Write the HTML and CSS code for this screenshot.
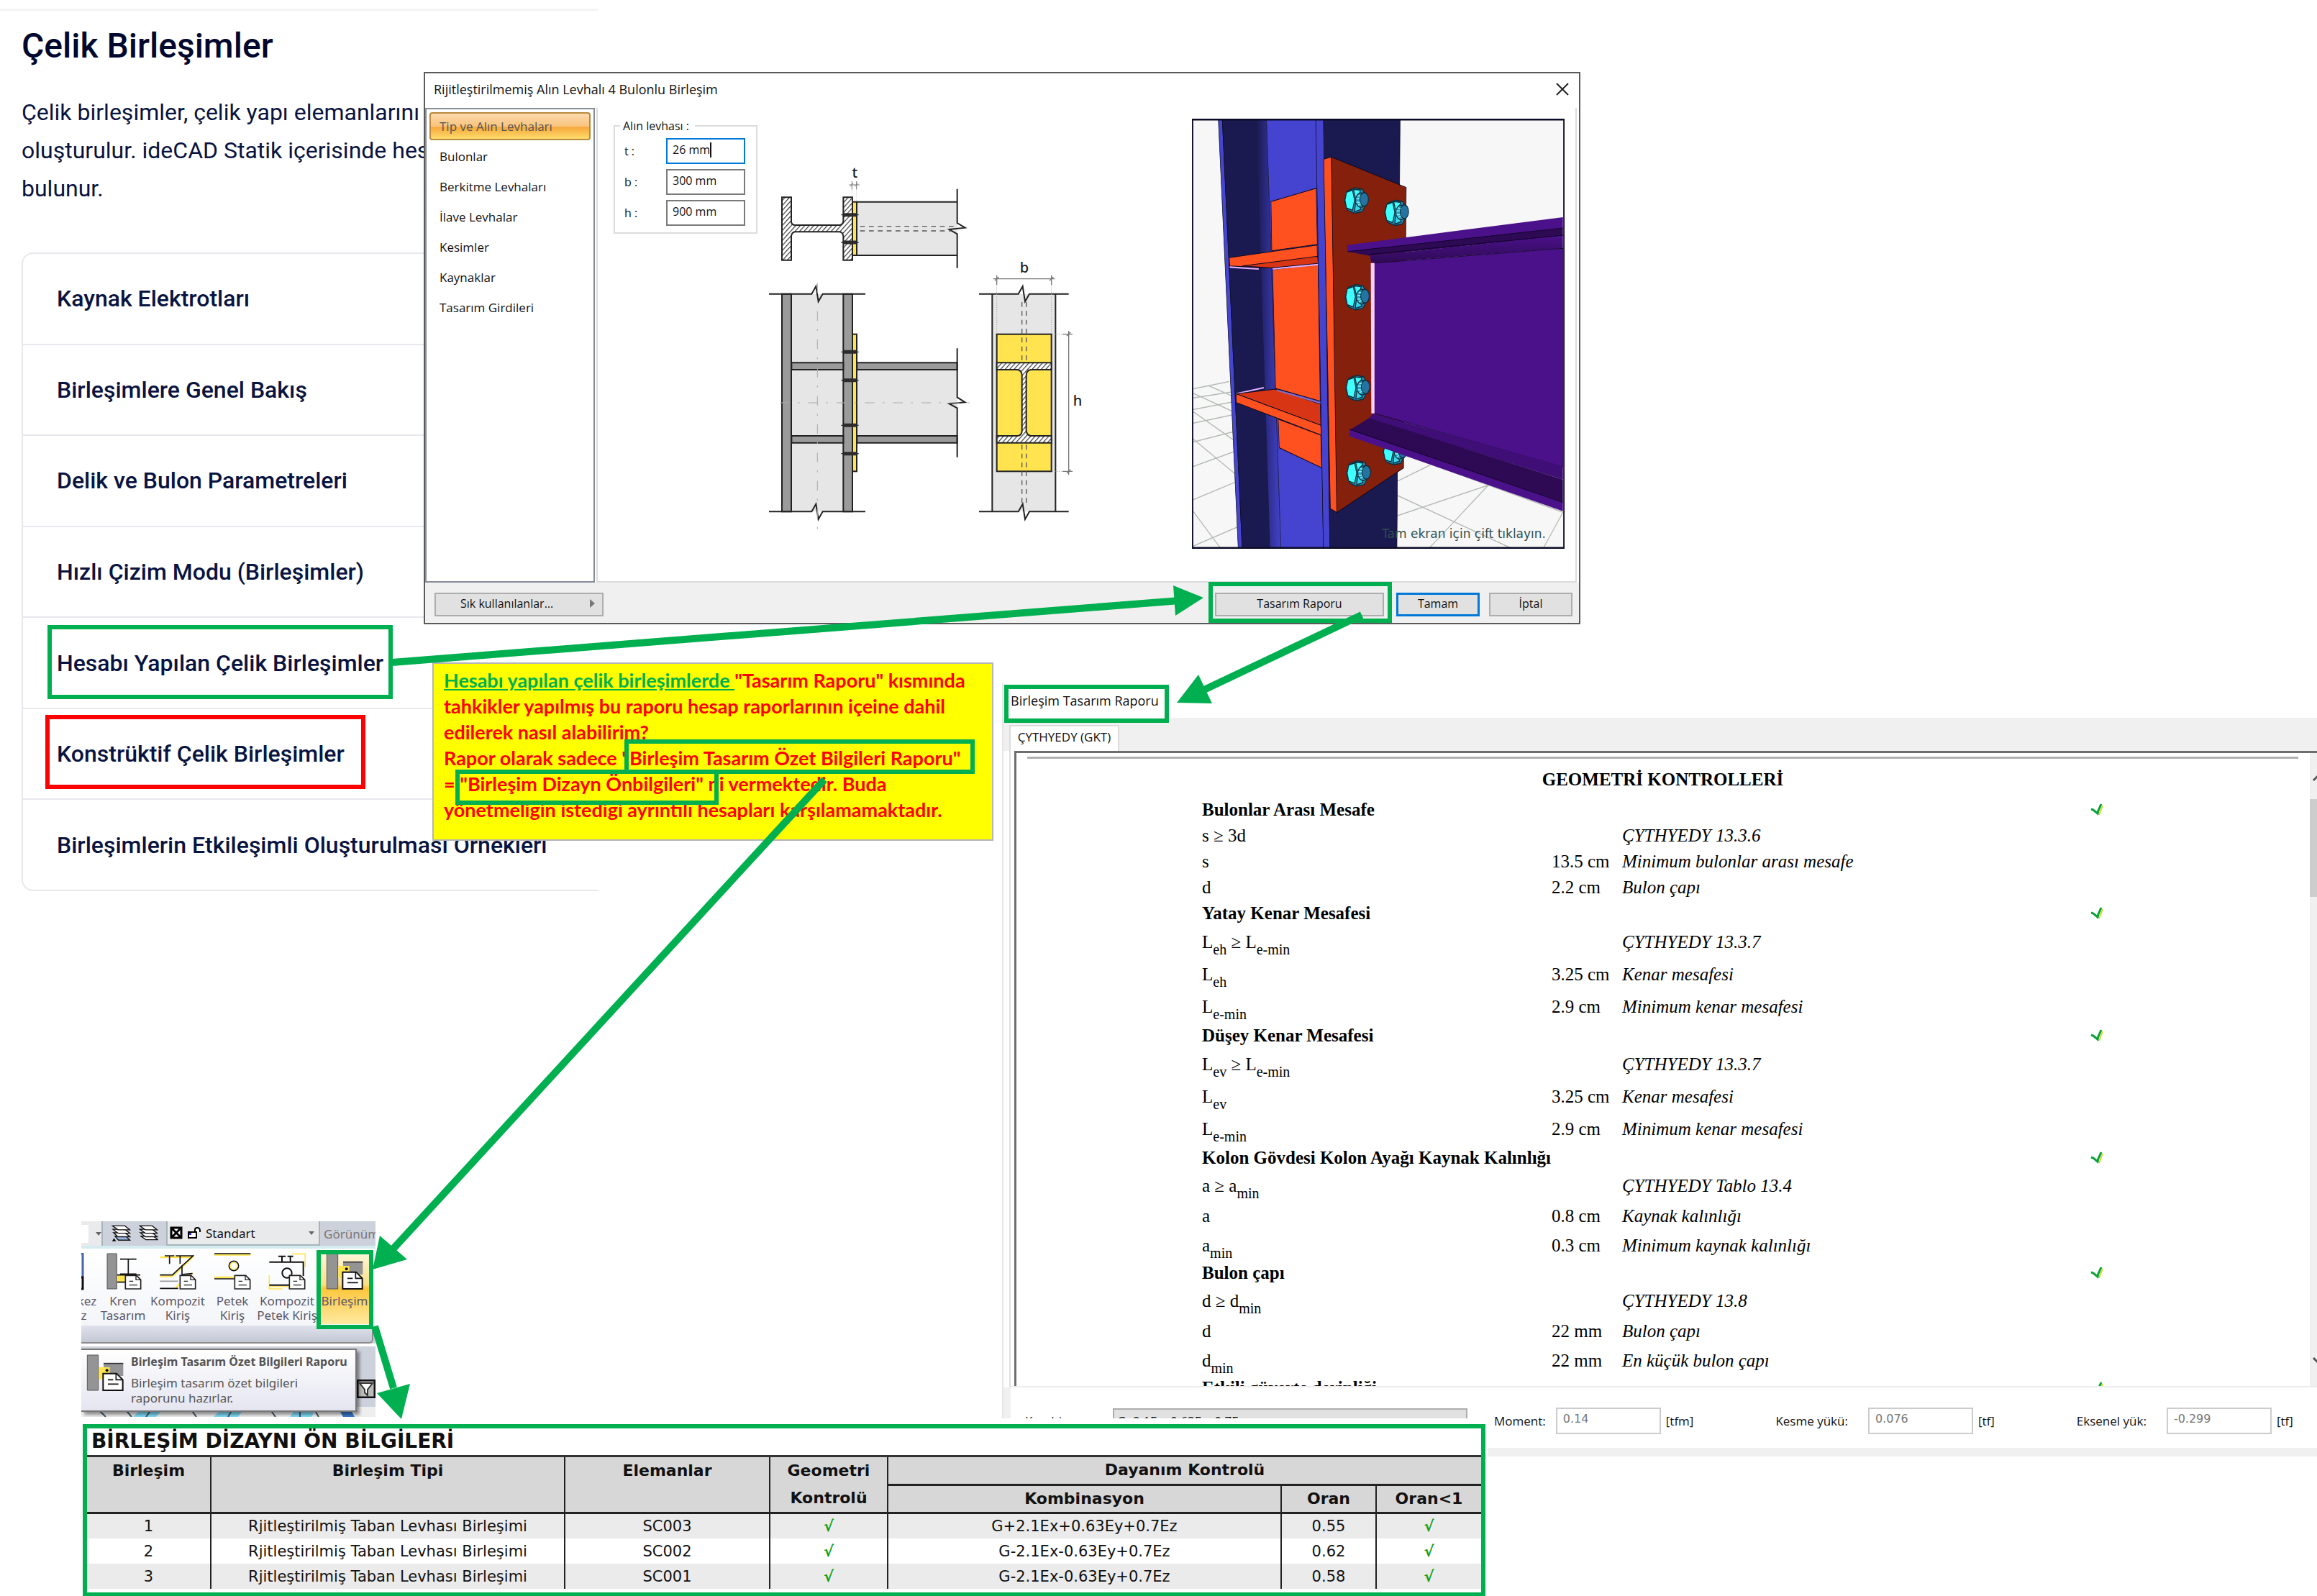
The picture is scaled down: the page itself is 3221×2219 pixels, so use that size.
FILE: index.html
```html
<!DOCTYPE html>
<html lang="tr">
<head>
<meta charset="utf-8">
<meta name="viewport" content="width=device-width, initial-scale=1">
<title>Çelik Birleşimler</title>
<link rel="stylesheet" href="styles.css">
</head>
<body>
<main class="board">

<article class="article">
  <h1>Çelik Birleşimler</h1>
  <p>Çelik birleşimler, çelik yapı elemanlarını b<br>oluşturulur. ideCAD Statik içerisinde hes<br>bulunur.</p>
  <nav class="topics">
    <a href="#">Kaynak Elektrotları</a>
    <a href="#">Birleşimlere Genel Bakış</a>
    <a href="#">Delik ve Bulon Parametreleri</a>
    <a href="#">Hızlı Çizim Modu (Birleşimler)</a>
    <a href="#">Hesabı Yapılan Çelik Birleşimler</a>
    <a href="#">Konstrüktif Çelik Birleşimler</a>
    <a href="#">Birleşimlerin Etkileşimli Oluşturulması Örnekleri</a>
  </nav>
</article>

<section class="dialog">
  <header class="dialog-title">
    <h2>Rijitleştirilmemiş Alın Levhalı 4 Bulonlu Birleşim</h2>
    <button class="close" aria-label="Kapat"><svg width="18" height="18" viewBox="0 0 18 18"><path d="M1 1L17 17M17 1L1 17" stroke="#222" stroke-width="2" fill="none"/></svg></button>
  </header>
  <div class="dialog-body">
    <nav class="pages">
      <button class="on">Tip ve Alın Levhaları</button>
      <button>Bulonlar</button>
      <button>Berkitme Levhaları</button>
      <button>İlave Levhalar</button>
      <button>Kesimler</button>
      <button>Kaynaklar</button>
      <button>Tasarım Girdileri</button>
    </nav>
    <div class="sheet">
      <fieldset class="plate">
        <legend>Alın levhası :</legend>
        <label for="pt">t :</label><span class="caret-box"><input id="pt" class="focus" value="26 mm"></span>
        <label for="pb">b :</label><input id="pb" value="300 mm">
        <label for="ph">h :</label><input id="ph" value="900 mm">
      </fieldset>
      <svg class="drawing" viewBox="60 0 1440 1560">
        <defs>
          <pattern id="hatch" width="14" height="14" patternUnits="userSpaceOnUse" patternTransform="rotate(42)"><rect width="14" height="14" fill="#fff"/><path d="M0 0V14" stroke="#333" stroke-width="7"/></pattern>
        </defs>
        <g stroke="#222" stroke-width="6" fill="#e6e6e6">
          <path stroke="none" d="M456 182H875V405H456Z"/>
          <path fill="none" d="M456 182H875M456 405H875M875 128V270L908 290L842 297L875 316V458"/>
          <path fill="none" stroke-width="4" stroke="#555" stroke-dasharray="20 17" d="M470 284H870M470 303H850"/>
          <path fill="url(#hatch)" d="M144 163H183V265Q185 279 200 279H384Q399 277 400 262V163H438V425H400V325Q398 309 384 307H200Q185 308 183 325V425H144Z"/>
          <rect x="438" y="182" width="18" height="223" fill="#ffe44f"/>
          <path stroke="#777" stroke-width="3" fill="none" d="M436 96V130M455 96V130M424 111H468M430 118L442 104M449 118L461 104"/>
          <path stroke="#aaa" stroke-width="2" stroke-dasharray="4 5" fill="none" d="M436 130V180M455 130V180"/>
          <path stroke="none" d="M183 566H400V1474H183ZM456 853H875V1187H456Z"/>
          <path fill="#9b9b9b" d="M144 566H183V1474H144ZM400 566H438V1474H400Z"/>
          <path fill="#9b9b9b" d="M184 853H400V882H184ZM184 1158H400V1187H184ZM457 853H875V882H457ZM457 1158H875V1187H457Z"/>
          <rect x="438" y="734" width="18" height="572" fill="#ffe44f"/>
          <path fill="none" d="M90 566H268L286 534L296 598L314 566H492M90 1474H268L286 1442L296 1506L314 1474H492M875 793V997L908 1018L842 1024L875 1042V1247"/>
        </g>
        <g stroke="#2c2c2c" stroke-width="15"><path d="M402 236H454M402 351H454M402 808H454M402 926H454M402 1114H454M402 1232H454"/><path stroke-width="4" d="M391 236H464M391 351H464M391 808H464M391 926H464M391 1114H464M391 1232H464"/></g>
        <path fill="none" stroke="#aaa" stroke-width="3" stroke-dasharray="40 34 8 36" d="M292 520V1560M136 1020H960"/>
        <g stroke="#222" stroke-width="6" fill="#e6e6e6">
          <path stroke="none" d="M1021 566H1285V1474H1021Z"/>
          <path fill="none" d="M1021 566V1474M1285 566V1474"/>
          <rect x="1040" y="734" width="228" height="572" fill="#ffe44f"/>
          <path fill="none" stroke="#555" stroke-width="4" stroke-dasharray="20 17" d="M1145 600V850M1163 600V850M1145 1195V1450M1163 1195V1450"/>
          <path fill="url(#hatch)" d="M1040 853H1268V882H1182Q1163 886 1163 905V1136Q1165 1156 1182 1158H1268V1187H1040V1158H1126Q1145 1156 1145 1136V905Q1145 886 1126 882H1040Z"/>
          <path fill="none" d="M966 566H1130L1148 534L1158 598L1176 566H1340M966 1474H1130L1148 1442L1158 1506L1176 1474H1340"/>
          <path stroke="#777" stroke-width="4" fill="none" d="M1025 503H1282M1040 488V528M1268 488V528M1032 511L1048 495M1260 511L1276 495M1340 720V1320M1314 734H1356M1314 1306H1356M1332 742L1348 726M1332 1314L1348 1298"/>
          <path stroke="#aaa" stroke-width="3" stroke-dasharray="4 5" fill="none" d="M1040 530V730M1268 530V730M1272 734H1310M1272 1306H1310"/>
        </g>
        <g font-family="Noto Sans, sans-serif" font-size="60" font-weight="500" fill="#222" text-anchor="middle"><text x="448" y="80">t</text><text x="1155" y="478">b</text><text x="1377" y="1031">h</text></g>
      </svg>
      <div class="view">
        <svg viewBox="76 148 1400 1188" preserveAspectRatio="none">
          <defs>
            <linearGradient id="fil"><stop offset="0" stop-color="#1a1a50"/><stop offset="1" stop-color="#4343cc"/></linearGradient>
            <linearGradient id="bm" x2="0" y2="1"><stop offset="0" stop-color="#4b118a"/><stop offset="1" stop-color="#2e0a55"/></linearGradient>
            <g id="bolt" stroke="#0c2c3a" stroke-width="3"><path fill="#2788b0" d="M-46 2L-34 -26L-6 -34L22 -30L30 -14L30 18L20 32L-8 36L-34 28Z"/><path fill="#40ffff" d="M-38 -22L-16 -28L-8 0L-16 28L-38 22L-44 0ZM-12 -30L14 -28L6 -8L-4 -4Z"/><path fill="#35d8e8" d="M-4 6L6 4L16 26L-8 32Z"/><ellipse cx="16" cy="0" rx="20" ry="20" fill="#2fa0c0"/><ellipse cx="28" cy="-2" rx="16" ry="19" fill="#2473a0"/><path fill="none" stroke="#7ff" d="M4 -12L14 -11M-1 -4L11 -4M-1 6L12 6M5 14L15 10"/></g>
          </defs>
          <path fill="#f7f7f7" d="M76 148H1476V1336H76Z"/>
          <path fill="none" stroke="#b4bab4" stroke-width="3" d="M76 895L215 874M76 920L225 903M76 952L230 930M76 990L235 965M76 1042L245 1010M76 1110L245 1065M76 1202L245 1150M76 1330L250 1275M140 886L245 920M76 905L245 962M76 955L245 1042M76 1030L248 1135M76 1228L185 1336M846 1150L970 1105M846 1245L1190 1160M965 1336L1190 1160L1340 1195M1395 1336L1470 1235L870 1075M846 1188L1280 1336"/>
          <g stroke="#0a0a22" stroke-width="2">
            <path fill="#4545d0" d="M175 148H190L265 1336H250Z"/><path fill="#1a1a50" d="M190 148H325L380 1336H265Z"/>
            <path fill="url(#fil)" stroke="none" d="M318 148H356L410 1336H370Z"/><path fill="#4444d0" d="M356 148H545L570 1336H410Z"/>
            <path fill="#1a1a50" d="M570 148H858L846 1336H594Z"/>
            <path fill="#ff5020" d="M373 377L543 340L547 495L376 513ZM379 565L550 550L558 928L390 893ZM400 978L560 1022L563 1112L404 1057Z"/>
            <path fill="#ff5020" d="M216 532L546 497L548 545L375 560L218 555Z"/><path fill="#d83515" d="M265 555L548 528L550 548L375 560Z"/>
            <path stroke="#e0b0ff" stroke-width="4" fill="none" d="M380 563L550 551M218 558L327 563M242 908L346 891"/>
            <path fill="#d83515" d="M242 908L390 895L558 936L560 995Z"/><path fill="#ff5020" d="M242 908L560 995L562 1022L243 932Z"/>
            <path stroke="#8a70c0" stroke-width="4" d="M395 898L558 933"/>
            <path fill="#4444d0" d="M541 148H570L594 1336H570Z"/>
            <path fill="#ff5020" d="M571 260L600 254L622 1236L596 1225Z"/><path fill="#85200c" d="M600 254L881 338L871 1113L620 1236Z"/>
          </g>
          <use href="#bolt" x="695" y="373"/><use href="#bolt" x="846" y="407"/><use href="#bolt" x="698" y="640"/><use href="#bolt" x="700" y="891"/><use href="#bolt" x="703" y="1127"/><use href="#bolt" x="840" y="1068"/>
          <path fill="#4b118a" d="M659 497L1470 420V450L661 517Z"/><path fill="#2e0a55" d="M661 515L1470 450V472L745 527Z"/>
          <path fill="url(#bm)" d="M745 527L1470 470V506L750 547Z"/>
          <path fill="#4b118a" stroke="#1a0535" stroke-width="2" d="M762 547L1470 506V1110L762 962Z"/><path fill="#ffd0ff" d="M748 547H762V962H750Z"/>
          <path fill="#3f0e76" d="M755 962L1470 1108V1145L740 977Z"/><path fill="#2e0a55" d="M742 975L1470 1145V1208L668 1008Z"/><path fill="#4b118a" d="M668 1006L1470 1208V1232L668 1025Z"/>
          <path fill="none" stroke="#12022a" stroke-width="2" d="M740 523L1470 470M668 1006L1470 1208M661 515L1470 450"/>
          <rect x="78" y="150" width="1396" height="1184" fill="none" stroke="#0c0c28" stroke-width="6"/>
        </svg>
        <span>Tam ekran için çift tıklayın.</span>
      </div>
    </div>
  </div>
  <footer class="dialog-foot">
    <button class="btn fav">Sık kullanılanlar… <i></i></button>
    <button class="btn wide">Tasarım Raporu</button>
    <button class="btn main">Tamam</button>
    <button class="btn">İptal</button>
  </footer>
</section>

<section class="report">
  <h2>Birleşim Tasarım Raporu</h2>
  <div class="tabs"><button>ÇYTHYEDY (GKT)</button></div>
  <div class="paper">
    <h3>GEOMETRİ KONTROLLERİ</h3>
    <table>
      <colgroup><col class="c-name"><col class="c-val"><col class="c-note"><col></colgroup>
      <tbody>
      <tr><th colspan="3">Bulonlar Arası Mesafe</th><td class="tick"><svg viewBox="0 0 18 18"><use href="#tick"/></svg></td></tr>
      <tr><td>s ≥ 3d</td><td></td><td class="n">ÇYTHYEDY 13.3.6</td></tr>
      <tr><td>s</td><td>13.5 cm</td><td class="n">Minimum bulonlar arası mesafe</td></tr>
      <tr><td>d</td><td>2.2 cm</td><td class="n">Bulon çapı</td></tr>
      <tr><th colspan="3">Yatay Kenar Mesafesi</th><td class="tick"><svg viewBox="0 0 18 18"><use href="#tick"/></svg></td></tr>
      <tr class="t1"><td>L<sub>eh</sub> ≥ L<sub>e-min</sub></td><td></td><td class="n">ÇYTHYEDY 13.3.7</td></tr>
      <tr class="t2"><td>L<sub>eh</sub></td><td>3.25 cm</td><td class="n">Kenar mesafesi</td></tr>
      <tr class="t2"><td>L<sub>e-min</sub></td><td>2.9 cm</td><td class="n">Minimum kenar mesafesi</td></tr>
      <tr><th colspan="3">Düşey Kenar Mesafesi</th><td class="tick"><svg viewBox="0 0 18 18"><use href="#tick"/></svg></td></tr>
      <tr class="t1"><td>L<sub>ev</sub> ≥ L<sub>e-min</sub></td><td></td><td class="n">ÇYTHYEDY 13.3.7</td></tr>
      <tr class="t2"><td>L<sub>ev</sub></td><td>3.25 cm</td><td class="n">Kenar mesafesi</td></tr>
      <tr class="t2"><td>L<sub>e-min</sub></td><td>2.9 cm</td><td class="n">Minimum kenar mesafesi</td></tr>
      <tr><th colspan="3">Kolon Gövdesi Kolon Ayağı Kaynak Kalınlığı</th><td class="tick"><svg viewBox="0 0 18 18"><use href="#tick"/></svg></td></tr>
      <tr class="t3"><td>a ≥ a<sub>min</sub></td><td></td><td class="n">ÇYTHYEDY Tablo 13.4</td></tr>
      <tr class="t3"><td>a</td><td>0.8 cm</td><td class="n">Kaynak kalınlığı</td></tr>
      <tr class="t4"><td>a<sub>min</sub></td><td>0.3 cm</td><td class="n">Minimum kaynak kalınlığı</td></tr>
      <tr><th colspan="3">Bulon çapı</th><td class="tick"><svg viewBox="0 0 18 18"><use href="#tick"/></svg></td></tr>
      <tr class="t3"><td>d ≥ d<sub>min</sub></td><td></td><td class="n">ÇYTHYEDY 13.8</td></tr>
      <tr class="t3"><td>d</td><td>22 mm</td><td class="n">Bulon çapı</td></tr>
      <tr class="t4"><td>d<sub>min</sub></td><td>22 mm</td><td class="n">En küçük bulon çapı</td></tr>
      <tr><th colspan="3">Etkili güverte derinliği</th><td class="tick"><svg viewBox="0 0 18 18"><use href="#tick"/></svg></td></tr>
      </tbody>
    </table>
    <div class="scroll">
      <svg viewBox="0 0 10 10"><path d="M5 8L12 1" /></svg>
      <i></i>
      <svg viewBox="0 0 10 10"><path d="M5 1L12 8" /></svg>
    </div>
  </div>
  <div class="forces">
    <label for="cmb" class="f-combo">Kombinasyon:</label>
    <select id="cmb"><option>G+2.1Ex+0.63Ey+0.7Ez</option></select>
    <label for="mom" class="f-moment">Moment:</label><input id="mom" value="0.14"><span>[tfm]</span>
    <label for="kes">Kesme yükü:</label><input id="kes" value="0.076"><span>[tf]</span>
    <label for="eks">Eksenel yük:</label><input id="eks" value="-0.299"><span>[tf]</span>
  </div>
</section>

<aside class="note"><u>Hesabı yapılan çelik birleşimlerde </u>"Tasarım Raporu" kısmında<br>tahkikler yapılmış bu raporu hesap raporlarının içeine dahil<br>edilerek nasıl alabilirim?<br>Rapor olarak sadece "Birleşim Tasarım Özet Bilgileri Raporu"<br>= "Birleşim Dizayn Önbilgileri" ni vermektedir. Buda<br>yönetmeliğin istediği ayrıntılı hesapları karşılamamaktadır.</aside>

<section class="ribbon">
  <div class="quick">
    <span class="q1"><i class="q-white"></i><i class="down"></i></span>
    <svg class="lay" viewBox="0 0 78 70"><g fill="#fff" stroke="#111" stroke-width="4"><path fill="#9db8e0" d="M14 46H58L74 62H28Z"/><path d="M8 32H54L74 48H26Z"/><path d="M6 18H54L74 34H26Z"/><path d="M4 4H54L74 20H26Z"/></g><path d="M2 66L10 54L18 66Z"/></svg>
    <svg class="lay" viewBox="0 0 78 70"><g fill="#fff" stroke="#111" stroke-width="4"><path d="M8 46H58L76 60H28Z"/><path d="M6 32H54L74 48H26Z"/><path d="M4 18H54L74 34H26Z"/><path d="M4 4H54L74 20H26Z"/></g></svg>
    <button class="q-combo">
      <svg width="18" height="18" viewBox="0 0 18 18"><path fill="#fff" stroke="#000" stroke-width="3" d="M2 2H16V16H2ZM2 2L16 16M16 2L2 16"/></svg>
      <svg width="20" height="18" viewBox="0 0 20 18"><path fill="#fff" stroke="#000" stroke-width="2" d="M2 8H13V16H2ZM11 8V5Q11 2 14 2Q18 2 18 6V8"/><path fill="#22f" d="M3 9H6V12H3Z"/></svg>
      <b>Standart</b><i class="down"></i>
    </button>
    <span class="q-view">Görünüm</span>
  </div>
  <div class="tools">
    <button class="cut"><svg width="52" height="52" viewBox="0 0 52 52"><path fill="none" stroke="#46a" stroke-width="3" d="M6 1H36V34"/><path fill="none" stroke="#111" stroke-width="3" d="M16 34H36V50H16"/></svg>Merkez<br>Düz</button>
    <button><svg width="52" height="52" viewBox="0 0 156 156"><path fill="#949494" stroke="#555" stroke-width="3" d="M12 3H52V150H12Z"/><path fill="#ffe44f" d="M56 92H120V120H56Z"/><path fill="none" stroke="#111" stroke-width="5" d="M66 26H134M100 26V88M66 88H134M54 92H150M54 122H90"/><use href="#doc"/></svg>Kren<br>Tasarım</button>
    <button><svg width="52" height="52" viewBox="0 0 156 156"><path fill="none" stroke="#ffe44f" stroke-width="7" d="M4 18H140L96 60L56 98H4M70 148L110 100L140 84"/><path fill="none" stroke="#111" stroke-width="5" d="M24 12H64M44 12V46M70 12H106M88 12V46M106 12H142L56 92H4M96 52V90L140 86M4 148H80"/><path stroke="#999" stroke-width="5" d="M4 118H80"/><use href="#doc"/></svg>Kompozit<br>Kiriş</button>
    <button><svg width="52" height="52" viewBox="0 0 156 156"><path fill="none" stroke="#ffe44f" stroke-width="8" d="M3 7H154M3 102H100"/><path fill="none" stroke="#111" stroke-width="5" d="M3 3H154M3 108H100"/><circle cx="84" cy="54" r="20" fill="#fff" stroke="#111" stroke-width="5"/><circle cx="84" cy="54" r="15" fill="none" stroke="#ffe44f" stroke-width="4"/><use href="#doc"/></svg>Petek<br>Kiriş</button>
    <button><svg width="52" height="52" viewBox="0 0 156 156"><path fill="none" stroke="#ffe44f" stroke-width="5" d="M100 4H154V60M4 94V150H58"/><path fill="none" stroke="#111" stroke-width="6" d="M4 38H146V96M42 14H72M57 14V36M80 14H104M92 14V36M4 134H90"/><path stroke="#ffe44f" stroke-width="4" d="M6 140H90"/><circle cx="78" cy="84" r="20" fill="#fff" stroke="#111" stroke-width="6"/><use href="#doc"/></svg>Kompozit<br>Petek Kiriş</button>
    <button class="hot"><svg width="52" height="52" viewBox="0 0 156 156"><use href="#join"/></svg>Birleşim</button>
  </div>
  <div class="band"></div>
  <div class="under">
    <svg class="filter" width="26" height="26" viewBox="0 0 26 26"><path fill="#bbb" stroke="#111" stroke-width="3" d="M1 1H25V25H1Z"/><path fill="#fff" stroke="#333" stroke-width="2" d="M4 5H22L15 14V22L11 18V14Z"/></svg>
    <svg class="model" viewBox="0 0 409 14" preserveAspectRatio="none"><path fill="#eee" d="M0 0H409V14H0Z"/><path fill="#7fdcf8" d="M86 0H116L104 14H72ZM198 0H228L218 14H184ZM300 0H328L320 14H290Z"/><path fill="#3a78c8" d="M356 0H372L380 14H364Z"/><path stroke="#456" stroke-width="2" d="M20 0L34 14M58 0L70 14M100 0L90 14M150 0L160 14M212 0L204 14M260 0L270 14M304 0V14M322 0L330 14"/></svg>
    <div class="tip" role="tooltip">
      <svg width="52" height="52" viewBox="0 0 156 156"><use href="#join"/></svg>
      <div><b>Birleşim Tasarım Özet Bilgileri Raporu</b><p>Birleşim tasarım özet bilgileri<br>raporunu hazırlar.</p></div>
    </div>
  </div>
</section>

<section class="summary">
  <div class="summary-box">
    <h2>BİRLEŞİM DİZAYNI ÖN BİLGİLERİ</h2>
    <table>
      <colgroup><col class="w1"><col class="w2"><col class="w3"><col class="w4"><col class="w5"><col class="w6"><col class="w7"></colgroup>
      <thead>
        <tr><th rowspan="2">Birleşim</th><th rowspan="2">Birleşim Tipi</th><th rowspan="2">Elemanlar</th><th rowspan="2">Geometri<br>Kontrolü</th><th colspan="3">Dayanım Kontrolü</th></tr>
        <tr><th>Kombinasyon</th><th>Oran</th><th>Oran&lt;1</th></tr>
      </thead>
      <tbody>
        <tr><td>1</td><td>Rjitleştirilmiş Taban Levhası Birleşimi</td><td>SC003</td><td class="ok">√</td><td>G+2.1Ex+0.63Ey+0.7Ez</td><td>0.55</td><td class="ok">√</td></tr>
        <tr><td>2</td><td>Rjitleştirilmiş Taban Levhası Birleşimi</td><td>SC002</td><td class="ok">√</td><td>G-2.1Ex-0.63Ey+0.7Ez</td><td>0.62</td><td class="ok">√</td></tr>
        <tr><td>3</td><td>Rjitleştirilmiş Taban Levhası Birleşimi</td><td>SC001</td><td class="ok">√</td><td>G-2.1Ex-0.63Ey+0.7Ez</td><td>0.58</td><td class="ok">√</td></tr>
      </tbody>
    </table>
  </div>
</section>

<svg class="marks" aria-hidden="true">
  <defs>
    <g id="tick"><path fill="none" stroke="#c8e020" stroke-width="2" d="M12 16L17 3"/><path fill="none" stroke="#0aa03c" stroke-width="3" d="M1 8L4 9L10 14L11 10L15 1"/></g>
    <g id="doc"><path fill="#fff" stroke="#222" stroke-width="5" d="M88 94H134L152 112V150H88Z"/><path fill="none" stroke="#222" stroke-width="4" d="M132 94V112H152M104 118H120M104 134H138"/></g>
    <g id="join"><path fill="#949494" stroke="#555" stroke-width="3" d="M4 3H50V150H4Z"/><path fill="#949494" d="M72 38H154V90H72Z"/><path stroke="#333" stroke-width="5" d="M72 38H154"/><path fill="#ffe44f" d="M52 54H98V104H52Z"/><circle cx="86" cy="67" r="6"/><path fill="#fff" stroke="#111" stroke-width="6" d="M70 80H126L152 106V150H70Z"/><path fill="none" stroke="#111" stroke-width="5" d="M124 80V106H150M90 106H112M90 124H134"/></g>
  </defs>
  <g fill="none" stroke="#00b050" stroke-width="6">
    <rect x="69" y="872" width="474" height="97"/>
    <rect x="1683" y="812" width="249" height="51"/>
    <rect x="1399" y="955" width="223" height="47"/>
    <rect x="871" y="1031" width="481" height="42"/>
    <rect x="636" y="1073" width="360" height="43"/>
    <rect x="443" y="1741" width="73" height="104"/>
    <rect x="66" y="997" width="439" height="97" stroke="#f00"/>
  </g>
  <g stroke="#00b050" stroke-width="10">
    <path d="M545 921L1640 835M1893 855L1674 959M1146 1084L545 1738M521 1844L547 1930"/>
  </g>
  <g fill="#00b050">
    <path d="M1673 831L1631 814L1634 856Z"/>
    <path d="M1636 977L1666 938L1685 978Z"/>
    <path d="M518 1765L528 1718L566 1751Z"/>
    <path d="M558 1973L524 1937L570 1924Z"/>
  </g>
</svg>
</main>
</body>
</html>
```
FILE: styles.css
```css
* { box-sizing: border-box; }
body { margin: 0; background: #fff; font-family: "Open Sans", "Noto Sans", sans-serif; }
button, input, select { font: inherit; color: inherit; margin: 0; }
h1, h2, h3, p { margin: 0; }
.board { position: relative; min-height: 100vh; overflow: hidden; }
.marks { position: absolute; left: 0; top: 0; width: 100%; height: 100%; pointer-events: none; }

/* Help article */
.article { width: 832px; margin-top: 12px; border-top: 3px solid #f4f4f7; padding: 17px 0 0 30px; font-family: Roboto, sans-serif; color: #0a1440; }
.article h1 { font-size: 48px; line-height: 64px; font-weight: 500; color: #03082e; }
.article p { margin: 34px 0 0; font-size: 32px; line-height: 53px; white-space: nowrap; }
.topics { margin-top: 62px; min-height: 888px; display: flex; flex-direction: column; border: 2px solid #e6e8ee; border-right: 0; border-radius: 16px 0 0 16px; }
.topics a { flex: 1; display: flex; align-items: center; padding: 0 47px; font-size: 32px; font-weight: 500; color: #0a1440; text-decoration: none; white-space: nowrap; border-top: 2px solid #e6e8ee; }
.topics a:first-child { border-top: 0; }

/* Connection dialog */
.dialog { position: absolute; left: 589px; top: 100px; width: 1608px; border: 2px solid #5a5a5a; background: #fff; font-size: 16px; color: #111; }
.dialog-title { display: flex; justify-content: space-between; align-items: center; height: 48px; padding: 0 14px 4px 12px; }
.dialog-title h2 { font-size: 18px; font-weight: 400; }
.close { border: 0; background: none; padding: 0; height: 18px; }
.dialog-body { display: flex; gap: 2px; height: 660px; }
.pages { width: 236px; border: 2px solid #848d98; padding: 4px; font-size: 17px; }
.pages button { display: block; width: 100%; height: 39px; margin-bottom: 3px; padding: 0 12px; border: 2px solid transparent; background: none; text-align: left; white-space: nowrap; }
.pages .on { border-color: #b98a3c; border-radius: 4px; color: #555; background: linear-gradient(#fbd9ae, #f9c47c 50%, #f8a83c 54%, #fddc6c); }
.sheet { flex: 1; display: flex; align-items: flex-start; border: 2px solid #dcdcdc; border-top: 0; margin-right: 3px; }
.plate { width: 200px; margin: 14px 6px 0 22px; padding: 6px 15px 9px 13px; border: 2px solid #dcdcdc; display: grid; grid-template-columns: 58px 1fr; row-gap: 7px; align-items: center; }
.plate legend { padding: 0 8px 0 4px; margin-left: -6px; line-height: 22px; }
.plate input { width: 110px; height: 36px; border: 2px solid #7a7a7a; padding: 0 7px 5px; background: #fff; }
.plate .focus { display: block; border-color: #0078d7; }
.caret-box { position: relative; }
.caret-box::after { content: ""; position: absolute; left: 61px; top: 6px; width: 2px; height: 21px; background: #111; }
.drawing { width: 480px; height: 520px; margin-top: 70px; }
.view { position: relative; width: 518px; height: 598px; margin: 15px 0 0 118px; }
.view svg { display: block; width: 100%; height: 100%; }
.view span { position: absolute; right: 26px; bottom: 9px; font: 17px/24px "DejaVu Sans", sans-serif; color: #2f4f4f; }
.dialog-foot { display: flex; align-items: center; gap: 13px; height: 56px; padding: 4px 9px 0 13px; background: #f0f0f0; }
.btn { width: 116px; height: 33px; padding: 0 0 2px; border: 2px solid #adadad; background: #e1e1e1; }
.btn.main { border: 3px solid #0078d7; }
.btn.wide { width: 235px; margin-right: 4px; }
.btn.fav { width: 235px; margin-right: auto; display: flex; align-items: center; justify-content: space-between; padding: 0 10px 2px 34px; }
.btn.fav i { border: 6px solid transparent; border-left: 7px solid #777; border-right: 0; }

/* Report window */
.report { position: absolute; left: 1393px; right: 0; top: 950px; border-left: 2px solid #e6e6e6; background: #fff; font-size: 17px; color: #111; }
.report h2 { height: 48px; padding-left: 10px; font-size: 18px; line-height: 48px; font-weight: 400; }
.tabs { height: 46px; background: #f0f0f0; padding: 10px 0 0 8px; }
.tabs button { display: block; width: 153px; height: 36px; border: 2px solid #dcdcdc; border-bottom: 0; background: #fff; padding: 0 0 5px; white-space: nowrap; }
.paper { position: relative; height: 885px; margin-left: 8px; padding-left: 7px; border-left: 2px solid #e0e0e0; overflow: hidden; font: 25px/28px "Liberation Serif", serif; color: #000; border-bottom: 2px solid #ececec; }
.paper::before { content: ""; position: absolute; left: 5px; right: 0; top: 0; bottom: 0; border: solid #6e6e6e; border-width: 3px 0 0 3px; }
.paper h3 { margin: 8px 26px 0 16px; border-top: 3px solid #b0b0b0; padding: 13px 0 10px; font-size: 25px; line-height: 32px; text-align: center; }
.paper table { width: calc(100% - 260px); margin-left: 259px; margin-top: -2px; border-collapse: collapse; table-layout: fixed; }
.paper th, .paper td { height: 36px; padding: 0; text-align: left; white-space: nowrap; line-height: 28px; }
.paper .t1 td { height: 44px; }
.paper .t2 td { height: 45px; }
.paper .t3 td { height: 42px; }
.paper .t4 td { height: 40px; }
.c-name { width: 486px; }
.c-val { width: 98px; }
.c-note { width: 651px; }
.paper .n { font-style: italic; }
.paper sub { font-size: 20px; line-height: 0; vertical-align: -9px; }
.paper .tick { line-height: 0; }
.tick svg { width: 18px; height: 18px; }
.scroll { position: absolute; right: 0; top: 3px; bottom: 0; width: 10px; padding: 30px 0; background: #f0f0f0; display: flex; flex-direction: column; justify-content: space-between; }
.scroll svg { width: 10px; height: 10px; fill: none; stroke: #555; stroke-width: 3px; }
.scroll i { height: 136px; margin: 24px 0 auto; background: #cdcdcd; }
.forces { display: flex; align-items: center; height: 96px; padding: 8px 0 0 20px; border-left: 10px solid #f0f0f0; border-bottom: 12px solid #f0f0f0; white-space: nowrap; }
.forces > * { flex: none; }
.forces label { margin-right: 28px; }
.forces .f-combo { width: 122px; margin: 0; }
.forces .f-moment { margin-right: 14px; }
.forces select { width: 493px; height: 34px; margin-right: 37px; border: 2px solid #adadad; background: #e1e1e1; }
.forces input { width: 146px; height: 37px; margin-right: 7px; border: 2px solid #ccc; background: #fff; padding: 0 8px 6px; font: 16px "DejaVu Sans", sans-serif; color: #777; }
.forces span { margin-right: 114px; }
.forces span:last-child { margin-right: 0; }

/* Question note */
.note { position: absolute; left: 601px; top: 921px; width: 780px; height: 248px; padding: 5px 14px; border: 2px solid #b5b5b5; background: #ff0; color: #f00; font: 700 27px/36px Lato, sans-serif; white-space: nowrap; }
.note u { color: #00b050; }

/* Ribbon excerpt */
.ribbon { position: absolute; left: 113px; top: 1698px; width: 409px; height: 272px; overflow: hidden; font-family: "Noto Sans", sans-serif; font-size: 17px; color: #5c5866; background: #cdd1dc; }
.quick { display: flex; align-items: center; height: 34px; }
.q1 { display: flex; align-items: center; gap: 10px; width: 34px; height: 34px; background: #e9eaec; border-right: 2px solid #a9b4ba; margin-right: 12px; }
.q-white { width: 10px; height: 25px; background: #fff; }
.down { border: 4px solid transparent; border-top: 5px solid #666; border-bottom: 0; }
.lay { flex: none; width: 27px; height: 24px; margin-right: 11px; }
.q-combo { flex: none; display: flex; align-items: center; gap: 6px; width: 214px; height: 34px; padding: 0 6px 0 3px; border: 2px solid #a9b4ba; border-top: 0; background: #e9eaec; margin-right: 5px; color: #111; }
.q-combo b { font-weight: 400; flex: 1; text-align: left; }
.q-view { color: #777; }
.tools { display: flex; height: 111px; padding: 5px 0 0; border-top: 4px solid #d4ecf0; background: linear-gradient(#fff, #f3f5f9); }
.tools button { flex: none; width: 76px; padding: 1px 0 0; border: 0; background: none; display: flex; flex-direction: column; align-items: center; line-height: 20px; font-size: 17px; white-space: nowrap; text-align: center; }
.tools .cut { margin: 0 -10px 0 -46px; }
.tools svg { margin-bottom: 5px; flex: none; }
.tools .hot { background: linear-gradient(#fdf6dc, #fbe089 45%, #fdc63c 50%, #fdeaa0); width: 68px; margin-left: 8px; height: 100px; }
.band { height: 25px; background: linear-gradient(#dfe2ec, #c4c8d4); border-bottom: 2px solid #8c8c8c; border-right: 2px solid #8c8c8c; border-radius: 0 0 6px 0; margin-right: 3px; }
.under { position: relative; height: 102px; border-top: 4px solid #fff; }
.filter { position: absolute; right: 0; top: 46px; }
.model { position: absolute; left: 0; bottom: 0; width: 100%; height: 14px; }
.tip { position: relative; width: 383px; height: 88px; margin-top: 3px; padding: 6px 7px 0; border: 2px solid #767676; border-left: 0; display: flex; gap: 10px; background: linear-gradient(#fff, #e4e5f0); box-shadow: 4px 4px 4px #0006; white-space: nowrap; line-height: 21px; color: #555; }
.tip b { display: block; margin-bottom: 8px; font-size: 16px; }

/* Summary table */
.summary { position: absolute; left: 112px; top: 1972px; width: 1956px; background: #fff; padding: 8px 3px 0; }
.summary-box { border: 6px solid #00b050; font: 21px/34px "DejaVu Sans", sans-serif; color: #111; padding-bottom: 5px; }
.summary h2 { height: 37px; padding-left: 6px; font-size: 28px; line-height: 36px; }
.summary table { width: 100%; border-collapse: collapse; table-layout: fixed; border-top: 3px solid #333; }
.summary th { height: 37px; padding: 0; background: #d7d7d7; font-size: 22px; line-height: 36px; vertical-align: top; border: 2px solid #222; border-bottom-width: 3px; }
.summary th[rowspan] { line-height: 38px; }
.summary td { height: 35px; padding: 0; text-align: center; border-left: 2px solid #222; border-right: 2px solid #222; }
.summary tr > :first-child[rowspan], .summary tbody td:first-child { border-left: 0; }
.summary tr > :last-child { border-right: 0; }
.summary tbody tr:nth-child(odd) { background: #ebebeb; }
.summary .ok { color: #12a012; font-weight: 700; }
.w1 { width: 172px; }
.w2 { width: 492px; }
.w3 { width: 285px; }
.w4 { width: 164px; }
.w5 { width: 547px; }
.w6 { width: 132px; }
```
